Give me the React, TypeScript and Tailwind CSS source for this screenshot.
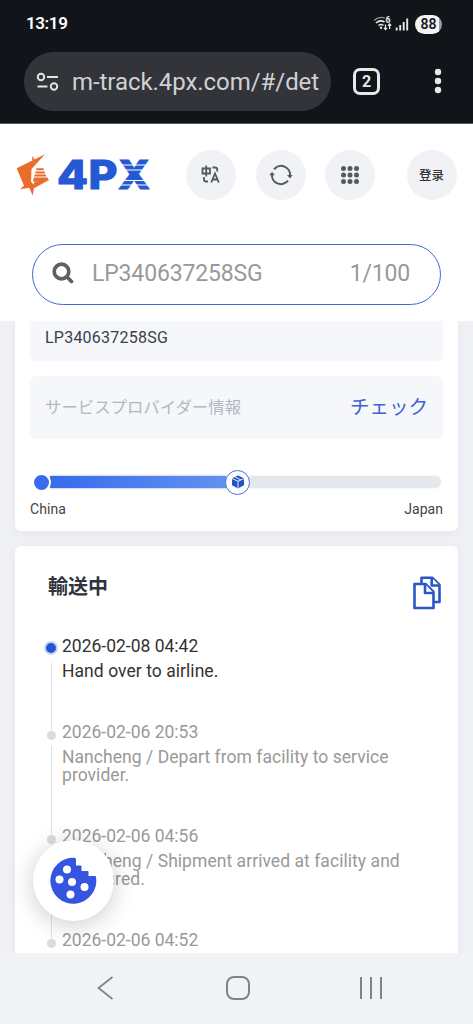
type TrackEvent = {
  time: string;
  text: string;
  active?: boolean;
};

const events: TrackEvent[] = [
  { time: '2026-02-08 04:42', text: 'Hand over to airline.', active: true },
  { time: '2026-02-06 20:53', text: 'Nancheng / Depart from facility to service provider.' },
  { time: '2026-02-06 04:56', text: 'Nancheng / Shipment arrived at facility and measured.' },
  { time: '2026-02-06 04:52', text: '' },
];

function StatusBar() {
  return (
    <div className="flex h-12 items-center pl-[26px] pr-[31px]">
      <span className="text-[17px] font-semibold tracking-[-0.4px] text-white">13:19</span>
      <svg className="ml-auto" width="36" height="18" viewBox="0 0 36 18" fill="none" stroke="#e4e6e9">
        <path d="M1 5.500Q6 1 12 3" strokeWidth="1.200" opacity=".6" />
        <path d="M3 8q4-3.600 8.500-1M5.500 10.500q2.500-2 5 0" strokeWidth="1.600" />
        <circle cx="8" cy="12.800" r="1.200" fill="#e4e6e9" stroke="none" />
        <path d="M12.500 9.500v5m-1.600-1.600 1.600 1.600 1.600-1.600M16.600 14V9m-1.600 1.600L16.600 9l1.600 1.600" strokeWidth="1.300" />
        <path d="M23.700 15.500v-3M27.200 15.500V10M30.700 15.500V7M34.200 15.500V3.500" strokeWidth="1.900" />
        <text x="12.500" y="8.200" fontSize="8.500" fontWeight="800" fill="#e4e6e9" stroke="none">
          6
        </text>
      </svg>
      <span className="ml-1.5 flex h-[19px] w-[27px] items-center justify-center rounded-full bg-[linear-gradient(90deg,#f3f4f6_88%,#9a9da1_88%)] text-[14px] font-semibold text-[#17191d]">
        88
      </span>
    </div>
  );
}

function AddressBar() {
  return (
    <div className="flex items-start pl-6 pt-1">
      <div className="flex h-[59px] w-[307px] items-center rounded-full bg-[#323439] pl-3">
        <svg width="24" height="20" viewBox="0 0 24 20" fill="none" stroke="#e0e2e5" strokeWidth="2">
          <circle cx="5" cy="5" r="3.200" />
          <path d="M11 5h11M1.500 14.500h10" />
          <circle cx="18" cy="14.500" r="3.200" />
        </svg>
        <span className="ml-3 whitespace-nowrap text-[24px] tracking-[-0.06px] text-[#cfd1d5]">m-track.4px.com/#/det</span>
      </div>
      <div className="ml-[22px] mt-4 flex size-[27px] items-center justify-center rounded-[7px] border-[3px] border-[#e6e8eb] text-[16px] font-bold text-[#e6e8eb]">
        2
      </div>
      <svg className="ml-[54px] mt-[15px]" width="8" height="28" viewBox="0 0 8 28" fill="#e6e8eb">
        <circle cx="4" cy="5" r="3.200" />
        <circle cx="4" cy="14" r="3.200" />
        <circle cx="4" cy="23" r="3.200" />
      </svg>
    </div>
  );
}

function Logo() {
  return (
    <svg width="136" height="56" viewBox="0 -6 136 56" className="shrink-0">
      <g fill="#eb6c2c">
        <path d="M29 1.300.7 15.300 8 32.700l-4 3.600 9.300-1.600L16.700 42.500 18 35.300 33 27l-14.500 1.500-1 3-2.500-3 .5-12.500Z" />
        <path d="m16.200 3 2.500 3.200-2.400 1.500Z" />
        <path d="M20.500 15.300h7l.5 2h-8ZM19.600 18.400h8.900l.6 2h-10ZM18.700 21.500h11l.6 2H18.100ZM17.800 24.600h13.300L33 27l-7 1.500h-9Z" />
      </g>
      <g fill="#2459d3" stroke="#2459d3" strokeWidth="1" fontFamily="Inter, sans-serif" fontSize="39" fontWeight="800">
        <text x="41" y="36" textLength="31" lengthAdjust="spacingAndGlyphs">4</text>
        <text x="72.500" y="36" textLength="29" lengthAdjust="spacingAndGlyphs">P</text>
        <text x="102" y="36" textLength="32" lengthAdjust="spacingAndGlyphs">X</text>
      </g>
      <path d="M102 12h34M102 17h34M102 27.500h34M102 32h34" stroke="#fff" strokeWidth="1.200" />
    </svg>
  );
}

function TranslateIcon() {
  return (
    <svg width="20" height="20" viewBox="0 0 20 20" fill="none" stroke="#56595e" strokeWidth="1.800">
      <path d="M1.500 3.500H9v5H1.500ZM5.200.5v11M11.500 2.500h2.700q2 0 2 2v2M3 12v2.500q0 2 2 2h2" />
      <path d="m10.200 17.500 3.800-9 3.800 9M11.500 14.500h5" />
    </svg>
  );
}

function RefreshIcon() {
  return (
    <svg width="24" height="24" viewBox="0 0 24 24" fill="none" stroke="#56595e" strokeWidth="2">
      <path d="M5 6.300A9 9 0 0 1 21 13M19 17.700A9 9 0 0 1 3 11" />
      <path d="m18 12 3 3.500 2.700-3.500ZM.3 12.300 3 8.800l3 3.500Z" fill="#56595e" stroke="none" />
    </svg>
  );
}

function GridIcon() {
  return (
    <svg width="20" height="20" viewBox="0 0 20 20" fill="#56595e">
      {[3.5, 10, 16.5].map((y) => [3.5, 10, 16.5].map((x) => <circle key={`${x}-${y}`} cx={x} cy={y} r="2.500" />))}
    </svg>
  );
}

function Header() {
  const button = 'flex size-[50px] shrink-0 items-center justify-center rounded-full bg-[#f0f2f6]';

  return (
    <header className="h-[197px] shrink-0 bg-white">
      <div className="flex h-[102px] items-center pl-4">
        <Logo />
        <div className="ml-[34px] flex gap-[19.500px]">
          <button className={button}>
            <TranslateIcon />
          </button>
          <button className={button}>
            <RefreshIcon />
          </button>
          <button className={button}>
            <GridIcon />
          </button>
        </div>
        <button className={`${button} ml-[31.500px] font-['Noto_Sans_CJK_SC',sans-serif] text-[12.500px] font-medium text-[#333]`}>登录</button>
      </div>
      <div className="ml-8 mt-[18px] flex h-[61px] w-[409px] items-center rounded-full border-[1.500px] border-[#3f68cf] pl-[19px] pr-[30px] text-[23px] text-[#999]">
        <svg className="-mt-[3px]" width="22" height="22" viewBox="0 0 22 22" fill="none" stroke="#5b6167" strokeWidth="3.700" strokeLinecap="round">
          <circle cx="9.500" cy="9.500" r="7.300" />
          <path d="m15 15 4.500 4.500" />
        </svg>
        <span className="ml-[18px] tracking-[-0.15px]">LP340637258SG</span>
        <span className="ml-auto tracking-[-0.2px]">1/100</span>
      </div>
    </header>
  );
}

function Progress() {
  return (
    <div className="mt-8">
      <div className="flex h-[22px] items-center">
        <div className="z-10 ml-[2px] size-[19px] shrink-0 rounded-full border-2 border-white bg-[#386bf0]" />
        <div className="-ml-px h-[12px] w-[176px] bg-linear-to-r from-[#386bed] to-[#6391ef] shadow-[0_0_2px_#7da0ef]" />
        <div className="z-10 -ml-px flex size-[25px] shrink-0 items-center justify-center rounded-full border-[1.500px] border-[#4b70db] bg-white">
          <svg width="14" height="14" viewBox="0 0 14 14">
            <path d="m7 .5 6 2.700v7L7 13.500l-6-3.300v-7Z" fill="#2451c5" />
            <path d="m1 3.500 6 2.800 6-2.800M7 6.300v7M4 2l6 3" fill="none" stroke="#fff" strokeWidth=".9" />
          </svg>
        </div>
        <div className="-ml-px mr-[2px] h-[12px] grow rounded-r-full bg-[#e4e7eb] shadow-[0_0_2px_#e4e7eb]" />
      </div>
      <div className="mt-[6px] flex justify-between text-[14px] leading-5 tracking-[0.05px] text-[#444]">
        <span>China</span>
        <span>Japan</span>
      </div>
    </div>
  );
}

function SummaryCard() {
  return (
    <section className="h-[210px] shrink-0 rounded-b-md bg-white px-[15px] shadow-[0_2px_12px_rgba(30,40,70,0.05)]">
      <div className="h-10 rounded-b-md bg-[#f5f7fb] pl-[15px] pt-[7px] text-[16px] leading-5 tracking-[0.23px] text-[#3c3e49]">
        LP340637258SG
      </div>
      <div className="mt-[15px] flex h-[63px] items-center justify-between rounded-md bg-[#f5f7fb] px-[15px] pb-[3px] font-['Noto_Sans_CJK_JP',sans-serif]">
        <span className="text-[16.400px] text-[#b4b6c0]">サービスプロバイダー情報</span>
        <span className="text-[19.500px] text-[#3f62cf]">チェック</span>
      </div>
      <Progress />
    </section>
  );
}

function CopyIcon() {
  return (
    <svg width="28" height="34" viewBox="0 0 28 34" fill="white" stroke="#2857c9" strokeWidth="2.600" strokeLinejoin="round">
      <path d="M8.500 1.800h10.700L26.500 9v17h-18Z" />
      <path d="M18.700 1.800V9.500h7.800" />
      <path d="M1.500 8h11l8 8v16h-19Z" />
      <path d="M12 8v9h8.500" />
    </svg>
  );
}

function Timeline() {
  return (
    <ul className="mt-[29px] text-[17.500px]">
      {events.map((event, i) => (
        <li
          key={event.time}
          className={`flex ${i === 0 ? 'h-[86px] text-[#333]' : 'h-[104px] text-[#999]'}`}
        >
          <div className="flex w-[14px] shrink-0 flex-col items-center">
            {event.active ? (
              <span className="mt-[6px] size-[14px] shrink-0 rounded-full border-2 border-[#c5d5fa] bg-[#2455ce]" />
            ) : (
              <span className="mt-[10px] size-[9px] shrink-0 rounded-full bg-[#dcdcdc]" />
            )}
            <span className={`-mb-[9px] w-px grow bg-[#e2e2e2] ${event.active ? 'mt-2' : 'mt-[6px]'}`} />
          </div>
          <div className="ml-1 w-[365px]">
            <p className="leading-[22px]">{event.time}</p>
            <p className="mt-[5px] leading-[18px] tracking-[0.05px]">{event.text}</p>
          </div>
        </li>
      ))}
    </ul>
  );
}

function CookieButton() {
  return (
    <button className="absolute left-[33px] top-[840px] flex size-[81px] items-center justify-center rounded-full bg-white pr-[2px] shadow-[0_4px_24px_rgba(0,0,0,0.200)]">
      <svg width="48" height="48" viewBox="0 0 48 48">
        <path d="M26 .8A23 23 0 1 0 47 20q0-1-1-1h-6.500v-4q0-1-1-1h-6V9.500q0-1-1-1H27V2Z" fill="#3554df" />
        <g fill="#fff">
          <circle cx="18" cy="12.500" r="4" />
          <circle cx="10.500" cy="22.500" r="4" />
          <circle cx="23" cy="25" r="4" />
          <circle cx="35.500" cy="30" r="4" />
          <circle cx="21.500" cy="37.500" r="4" />
        </g>
      </svg>
    </button>
  );
}

function NavigationBar() {
  return (
    <nav className="flex h-[71px] shrink-0 items-center bg-[#f1f3f5] pb-[2px] pl-[89px] text-[#818487]">
      <svg width="34" height="28" viewBox="0 0 34 28" fill="none" stroke="currentColor" strokeWidth="1.800">
        <path d="M23.500 3 9.500 14l14 11" />
      </svg>
      <span className="ml-[103px] size-[24px] rounded-[8px] border-2 border-[#818487]" />
      <span className="ml-[110px] flex h-[22px] w-[22px] justify-between">
        <span className="w-[2px] bg-[#818487]" />
        <span className="w-[2px] bg-[#818487]" />
        <span className="w-[2px] bg-[#818487]" />
      </span>
    </nav>
  );
}

function App() {
  return (
    <div className="relative flex h-[1024px] w-[473px] flex-col overflow-hidden bg-[#f0f2f5] font-[Roboto,'Noto_Sans_CJK_JP',sans-serif]">
      <div className="h-[124px] shrink-0 border-b border-[#55585d] bg-[#111419]">
        <StatusBar />
        <AddressBar />
      </div>
      <Header />
      <main className="flex h-[632px] shrink-0 flex-col overflow-hidden bg-[#eff1f5] px-[15px]">
        <SummaryCard />
        <section className="mt-[15px] h-[450px] shrink-0 rounded-t-md bg-white pl-[29px] pr-[17px] pt-[26px] shadow-[0_2px_12px_rgba(30,40,70,0.05)]">
          <div className="flex h-[34px] items-start justify-between pl-1">
            <h2 className="font-['Noto_Sans_CJK_JP',sans-serif] text-[20px] font-bold leading-7 text-[#30323e]">輸送中</h2>
            <span className="mt-1">
              <CopyIcon />
            </span>
          </div>
          <Timeline />
        </section>
      </main>
      <NavigationBar />
      <CookieButton />
    </div>
  );
}

export default App;
